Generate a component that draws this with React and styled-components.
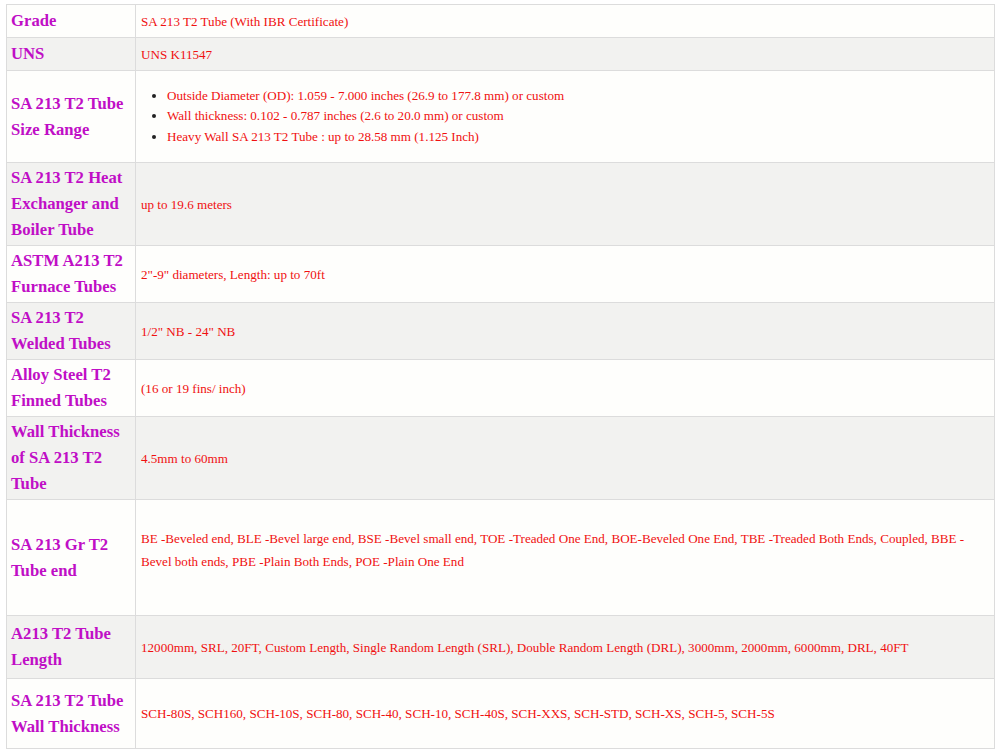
import React from "react";
import styled, { createGlobalStyle } from "styled-components";

const Global = createGlobalStyle`
  html, body { margin: 0; padding: 0; background: #ffffff; }
  body { font-family: "Liberation Serif", "Times New Roman", serif; }
`;

const Page = styled.div`
  padding: 4px 5px 0 6px;
`;

const Table = styled.table`
  width: 989px;
  border-collapse: collapse;
  border: 1px solid #dcdcdc;
`;

const Row = styled.tr`
  height: ${(p) => p.$h}px;
  background: ${(p) => (p.$alt ? "#f2f2f0" : "#fefefc")};
`;

const Head = styled.th`
  width: 120px;
  padding: 0 4px 0 4px;
  border: 1px solid #dcdcdc;
  text-align: left;
  vertical-align: middle;
  font-size: 16.7px;
  font-weight: bold;
  line-height: 26px;
  color: #c00ec6;
`;

const Cell = styled.td`
  padding: ${(p) => p.$pad || "0 5px"};
  border: 1px solid #dcdcdc;
  vertical-align: middle;
  font-size: 13.1px;
  line-height: ${(p) => p.$lh || 17}px;
  color: #f01010;
`;

const List = styled.ul`
  margin: 0;
  padding-left: 26px;
  list-style: disc;
  li { line-height: 20.5px; }
  li::marker { color: #222; }
`;

const rows = [
  { h: 33, head: "Grade", value: "SA 213 T2 Tube (With IBR Certificate)" },
  { h: 33, head: "UNS", value: "UNS K11547" },
  {
    h: 92,
    head: "SA 213 T2 Tube Size Range",
    list: [
      "Outside Diameter (OD): 1.059 - 7.000 inches (26.9 to 177.8 mm) or custom",
      "Wall thickness: 0.102 - 0.787 inches (2.6 to 20.0 mm) or custom",
      "Heavy Wall SA 213 T2 Tube : up to 28.58 mm (1.125 Inch)",
    ],
  },
  { h: 83, head: "SA 213 T2 Heat Exchanger and Boiler Tube", value: "up to 19.6 meters" },
  { h: 57, head: "ASTM A213 T2 Furnace Tubes", value: "2\"-9\" diameters, Length: up to 70ft" },
  { h: 57, head: "SA 213 T2 Welded Tubes", value: "1/2\" NB - 24\" NB" },
  { h: 57, head: "Alloy Steel T2 Finned Tubes", value: "(16 or 19 fins/ inch)" },
  { h: 83, head: "Wall Thickness of SA 213 T2 Tube", value: "4.5mm to 60mm" },
  {
    h: 116,
    head: "SA 213 Gr T2 Tube end",
    value:
      "BE -Beveled end, BLE -Bevel large end, BSE -Bevel small end, TOE -Treaded One End, BOE-Beveled One End, TBE -Treaded Both Ends, Coupled, BBE - Bevel both ends, PBE -Plain Both Ends, POE -Plain One End",
    pad: "0 24px 16px 5px",
    lh: 23,
  },
  {
    h: 63,
    head: "A213 T2 Tube Length",
    value:
      "12000mm, SRL, 20FT, Custom Length, Single Random Length (SRL), Double Random Length (DRL), 3000mm, 2000mm, 6000mm, DRL, 40FT",
  },
  {
    h: 70,
    head: "SA 213 T2 Tube Wall Thickness",
    value: "SCH-80S, SCH160, SCH-10S, SCH-80, SCH-40, SCH-10, SCH-40S, SCH-XXS, SCH-STD, SCH-XS, SCH-5, SCH-5S",
  },
];

export default function App() {
  return (
    <>
      <Global />
      <Page>
        <Table>
          <tbody>
            {rows.map((r, i) => (
              <Row key={i} $h={r.h} $alt={i % 2 === 1}>
                <Head>{r.head}</Head>
                <Cell $pad={r.pad} $lh={r.lh}>
                  {r.list ? (
                    <List>
                      {r.list.map((t) => (
                        <li key={t}>{t}</li>
                      ))}
                    </List>
                  ) : (
                    r.value
                  )}
                </Cell>
              </Row>
            ))}
          </tbody>
        </Table>
      </Page>
    </>
  );
}
